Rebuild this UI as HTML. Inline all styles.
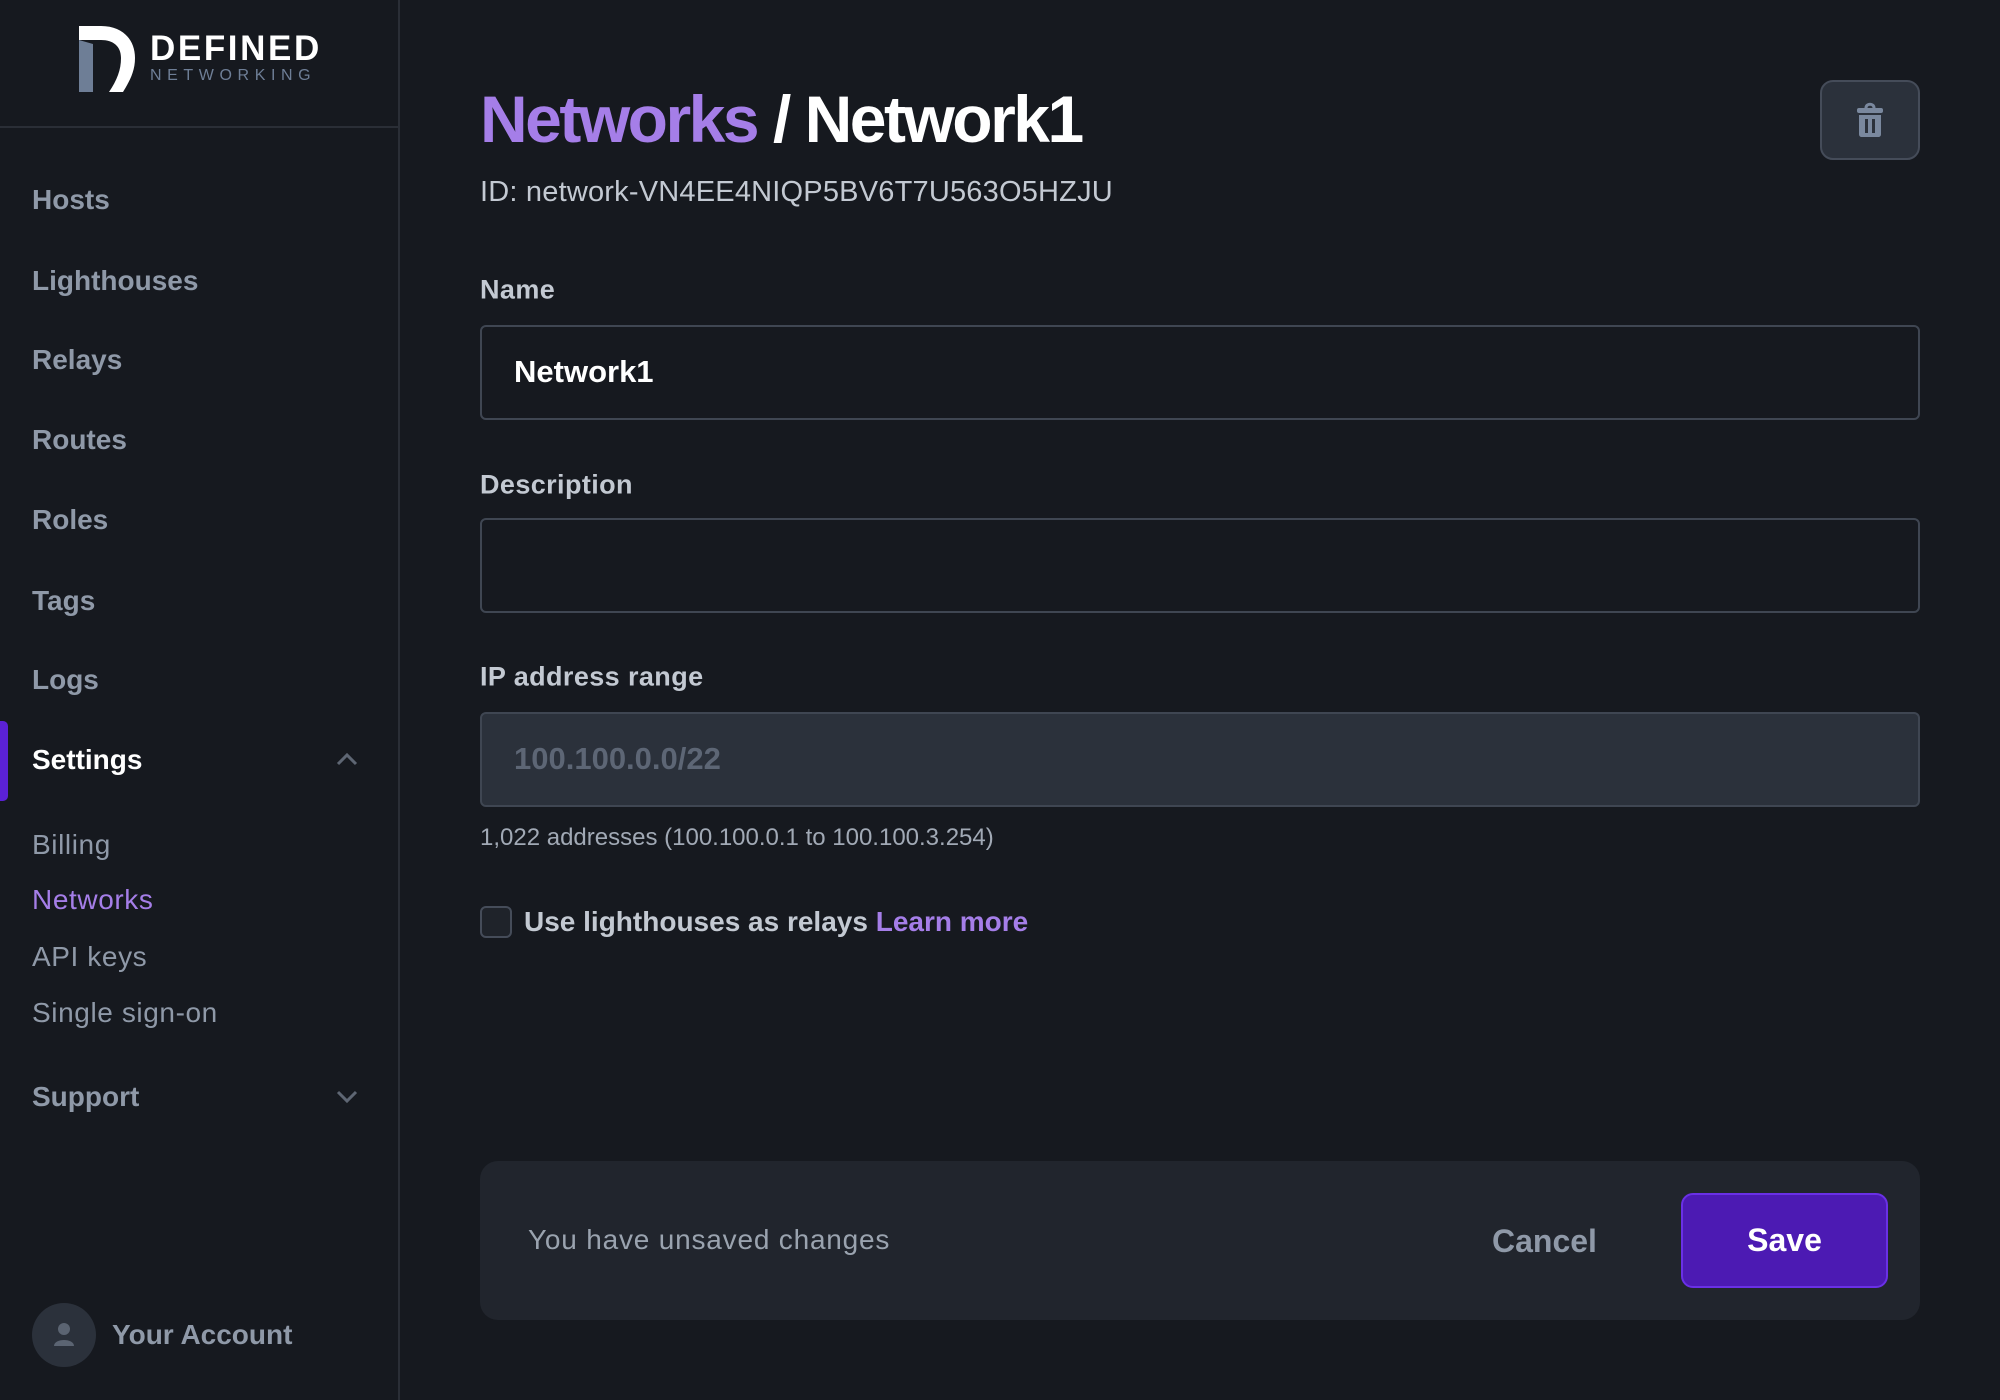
<!DOCTYPE html>
<html><head><meta charset="utf-8"><style>
*{box-sizing:border-box;margin:0;padding:0}
body{width:2000px;height:1400px;background:#16191f;font-family:"Liberation Sans",sans-serif;position:relative;overflow:hidden}
.side{position:absolute;left:0;top:0;width:400px;height:1400px;border-right:2px solid #2a2e36}
.logosep{position:absolute;left:0;top:126px;width:398px;height:2px;background:#2a2e36}
.nav{position:absolute;left:32px;font-size:28px;font-weight:bold;color:#8f99a8;line-height:1;transform:translateY(-50%)}
.sub{position:absolute;left:32px;font-size:28px;color:#8f99a8;line-height:1;transform:translateY(-50%);letter-spacing:0.6px}
.abs{position:absolute}
.label{position:absolute;left:480px;font-size:27px;font-weight:bold;color:#c3c9d2;transform:translateY(-50%);line-height:1;letter-spacing:0.4px}
.inp{position:absolute;left:480px;width:1440px;height:95px;border:2px solid #3f4652;border-radius:6px;background:#16191f}
</style></head><body>
<div class="side">
 <svg class="abs" style="left:79px;top:26px" width="56" height="66" viewBox="0 0 56 66">
  <path d="M0 0 H22 C44 0 56 14 56 32 C56 46 50 56 44 66 H30 C38 54 42 44 42 32 C42 20 34 14 22 14 H0 Z" fill="#fff"/>
  <path d="M0 14 L14 18 V66 H0 Z" fill="#6e7e96"/>
 </svg>
 <div class="abs" style="left:150px;top:31px;font-size:35px;color:#fff;letter-spacing:2.6px;line-height:1;font-weight:bold">DEFINED</div>
 <div class="abs" style="left:150px;top:68px;font-size:16px;color:#6e7e96;letter-spacing:5.6px;line-height:1">NETWORKING</div>
 <div class="logosep"></div>
 <div class="nav" style="top:200px">Hosts</div>
 <div class="nav" style="top:281px">Lighthouses</div>
 <div class="nav" style="top:360px">Relays</div>
 <div class="nav" style="top:440px">Routes</div>
 <div class="nav" style="top:520px">Roles</div>
 <div class="nav" style="top:601px">Tags</div>
 <div class="nav" style="top:680px">Logs</div>
 <div class="abs" style="left:0;top:721px;width:8px;height:80px;background:#5b21d6;border-radius:0 5px 5px 0"></div>
 <div class="nav" style="top:760px;color:#fff">Settings</div>
 <svg class="abs" style="left:336px;top:752px" width="22" height="14" viewBox="0 0 22 14"><path d="M2 12 L11 3 L20 12" stroke="#5e6673" stroke-width="3" fill="none"/></svg>
 <div class="sub" style="top:845px">Billing</div>
 <div class="sub" style="top:900px;color:#a57ee8">Networks</div>
 <div class="sub" style="top:957px">API keys</div>
 <div class="sub" style="top:1013px">Single sign-on</div>
 <div class="nav" style="top:1097px">Support</div>
 <svg class="abs" style="left:336px;top:1090px" width="22" height="14" viewBox="0 0 22 14"><path d="M2 2 L11 11 L20 2" stroke="#5e6673" stroke-width="3" fill="none"/></svg>
 <div class="abs" style="left:32px;top:1303px;width:64px;height:64px;border-radius:50%;background:#2b313b"></div>
 <svg class="abs" style="left:52px;top:1322px" width="24" height="26" viewBox="0 0 24 26"><circle cx="12" cy="7" r="6" fill="#5b6472"/><path d="M2 24 C2 16 22 16 22 24 Z" fill="#5b6472"/></svg>
 <div class="nav" style="left:112px;top:1335px">Your Account</div>
</div>

<div class="abs" style="left:480px;top:86px;font-size:66px;font-weight:bold;letter-spacing:-2.5px;line-height:1;color:#a57ee8">Networks <span style="color:#fff">/ Network1</span></div>
<div class="abs" style="left:480px;top:178px;font-size:29px;color:#c3c9d2;line-height:1;letter-spacing:0.2px">ID: network-VN4EE4NIQP5BV6T7U563O5HZJU</div>
<div class="abs" style="left:1820px;top:80px;width:100px;height:80px;border:2px solid #454c59;border-radius:13px;background:#2b313b"></div>
<svg class="abs" style="left:1856px;top:102px" width="28" height="36" viewBox="0 0 28 36">
 <path d="M10 6 C10 1 18 1 18 6" stroke="#7a889e" stroke-width="3" fill="none"/>
 <rect x="1" y="6" width="26" height="5" rx="2" fill="#7a889e"/>
 <path d="M3 13 H25 V32 C25 34 24 35 22 35 H6 C4 35 3 34 3 32 Z" fill="#7a889e"/>
 <rect x="9" y="17" width="3" height="14" fill="#2b313b"/><rect x="16" y="17" width="3" height="14" fill="#2b313b"/>
</svg>

<div class="label" style="top:290px">Name</div>
<div class="inp" style="top:325px"></div>
<div class="abs" style="left:514px;top:356px;font-size:31px;font-weight:bold;color:#fff;line-height:1">Network1</div>
<div class="label" style="top:485px">Description</div>
<div class="inp" style="top:518px"></div>
<div class="label" style="top:677px">IP address range</div>
<div class="inp" style="top:712px;background:#2b313b"></div>
<div class="abs" style="left:514px;top:743px;font-size:31px;font-weight:bold;color:#5d6675;line-height:1">100.100.0.0/22</div>
<div class="abs" style="left:480px;top:826px;font-size:24px;color:#a1a9b5;line-height:1">1,022 addresses (100.100.0.1 to 100.100.3.254)</div>
<div class="abs" style="left:480px;top:906px;width:32px;height:32px;border:2px solid #454c59;border-radius:6px;background:#1f232a"></div>
<div class="abs" style="left:524px;top:908px;font-size:28px;font-weight:bold;color:#c3c9d2;line-height:1">Use lighthouses as relays <span style="color:#a57ee8">Learn more</span></div>

<div class="abs" style="left:480px;top:1161px;width:1440px;height:159px;background:#21252d;border-radius:18px"></div>
<div class="abs" style="left:528px;top:1226px;font-size:28px;color:#9aa3af;line-height:1;letter-spacing:0.8px">You have unsaved changes</div>
<div class="abs" style="left:1492px;top:1225px;font-size:32px;font-weight:bold;color:#8f99a8;line-height:1">Cancel</div>
<div class="abs" style="left:1681px;top:1193px;width:207px;height:95px;background:#4c1ab3;border:2px solid #6a30e6;border-radius:12px;color:#fff;font-size:32px;font-weight:bold;text-align:center;line-height:91px">Save</div>
</body></html>
